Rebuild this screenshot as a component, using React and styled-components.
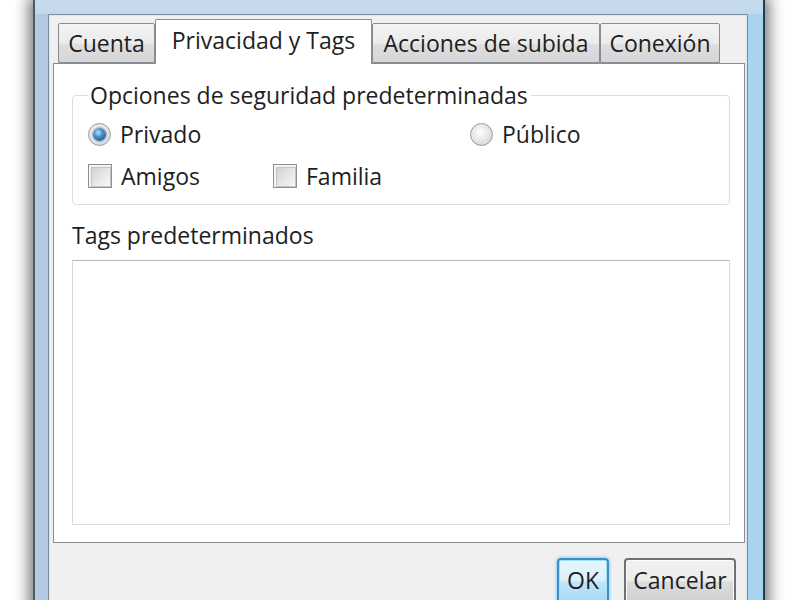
import React from "react";
import styled, { createGlobalStyle } from "styled-components";

const Global = createGlobalStyle`
  html, body { margin: 0; padding: 0; background: #ffffff; }
  body { width: 800px; height: 600px; overflow: hidden; font-family: "Open Sans", "Noto Sans", sans-serif; }
  * { box-sizing: border-box; }
`;

const Desktop = styled.div`
  width: 800px;
  height: 600px;
  overflow: hidden;
  background: #ffffff;
  padding-left: 33px;
`;

const Window = styled.div`
  width: 732px;
  height: 660px;
  border-left: 2px solid #4c5b69;
  border-right: 2px solid #21404f;
  background: linear-gradient(90deg, #b2c9e1 0%, #bcd2e8 40%, #a9d3ef 100%);
  box-shadow: 0 0 14px 4px rgba(0, 0, 0, 0.55);
  padding: 0 15px 0 13px;
  display: flex;
  flex-direction: column;
`;

const TitleBar = styled.div`
  height: 14px;
  background: linear-gradient(180deg, #c9dcee, #c3d8ec);
  margin: 0 -15px 0 -13px;
`;

const Client = styled.div`
  flex: 1;
  background: #f0f0f0;
  border: 1px solid #7c8d9e;
  box-shadow: inset 0 0 0 1px #dde5ec;
  padding: 4px 2px 0 4px;
  display: flex;
  flex-direction: column;
`;

const TabRow = styled.div`
  display: flex;
  align-items: flex-end;
  height: 44px;
  padding-left: 5px;
  position: relative;
  z-index: 1;
`;

const Tab = styled.div`
  width: ${(p) => p.$w}px;
  height: ${(p) => (p.$active ? 45 : 40)}px;
  margin-bottom: ${(p) => (p.$active ? -1 : 0)}px;
  border: 1px solid #898c95;
  border-bottom: ${(p) => (p.$active ? "none" : "1px solid #898c95")};
  border-radius: 2px 2px 0 0;
  background: ${(p) =>
    p.$active
      ? "#ffffff"
      : "linear-gradient(180deg, #f3f3f3 0%, #ebebeb 50%, #dedede 55%, #d6d6d6 100%)"};
  display: flex;
  align-items: center;
  justify-content: center;
  padding-bottom: ${(p) => (p.$active ? 5 : 0)}px;
  font-size: 23px;
  color: #1e1e1e;
  white-space: nowrap;
`;

const Panel = styled.div`
  height: 480px;
  background: #ffffff;
  border: 1px solid #898c95;
  padding: 17px 14px 0 18px;
  display: flex;
  flex-direction: column;
`;

const Group = styled.fieldset`
  margin: 0;
  border: 1px solid #d5dfe5;
  border-radius: 4px;
  padding: 4px 0 7px 15px;
  box-shadow: inset 1px 1px 0 #ffffff;
`;

const Legend = styled.legend`
  padding: 0 3px 0 2px;
  font-size: 23px;
  line-height: 28px;
  color: #1e1e1e;
`;

const OptionGrid = styled.div`
  display: grid;
  grid-template-columns: 185px 197px 1fr;
  grid-auto-rows: 42px;
  align-items: center;
`;

const Option = styled.label`
  display: flex;
  align-items: center;
  gap: 9px;
  font-size: 23px;
  color: #1e1e1e;
  grid-column: ${(p) => p.$col};
  grid-row: ${(p) => p.$row};
`;

const Radio = styled.span`
  width: 23px;
  height: 23px;
  border-radius: 50%;
  border: 1px solid #9a9a9a;
  background: radial-gradient(circle at 45% 40%, #ffffff 0%, #e6e6e6 50%, #c9c9c9 100%);
  display: flex;
  align-items: center;
  justify-content: center;
  &::after {
    content: "";
    display: ${(p) => (p.$checked ? "block" : "none")};
    width: 13px;
    height: 13px;
    border-radius: 50%;
    background: radial-gradient(circle at 40% 35%, #b9e2ff 0%, #3f8cc9 40%, #0f4f85 100%);
    box-shadow: 0 0 1px 1px rgba(40, 90, 140, 0.4);
  }
`;

const Check = styled.span`
  width: 24px;
  height: 24px;
  border: 1px solid #8f8f8f;
  background: #f4f4f4;
  padding: 2px;
  &::after {
    content: "";
    display: block;
    width: 100%;
    height: 100%;
    border: 1px solid #c4c4c4;
    background: linear-gradient(135deg, #d2d2d2 0%, #e6e6e6 50%, #f7f7f7 100%);
  }
`;

const FieldLabel = styled.div`
  margin-top: 16px;
  font-size: 23px;
  line-height: 28px;
  color: #1e1e1e;
`;

const TagsBox = styled.div`
  margin-top: 11px;
  height: 265px;
  border: 1px solid #dadada;
  border-top-color: #b9b9b9;
  background: #ffffff;
`;

const ButtonRow = styled.div`
  display: flex;
  justify-content: flex-end;
  gap: 15px;
  margin-top: 15px;
  padding-right: 9px;
`;

const Button = styled.div`
  width: ${(p) => p.$w}px;
  height: 46px;
  border-radius: 4px;
  border: 2px solid ${(p) => (p.$default ? "#3c8fc4" : "#707070")};
  box-shadow: ${(p) =>
    p.$default ? "0 0 3px 1px #8fd5f5, inset 0 0 0 1px #9fe0fa" : "inset 0 0 0 1px #fbfbfb"};
  background: ${(p) =>
    p.$default
      ? "linear-gradient(180deg, #e8f6fd 0%, #d9f0fc 50%, #bee6fd 52%, #a7d9f5 100%)"
      : "linear-gradient(180deg, #f2f2f2 0%, #ebebeb 50%, #dddddd 52%, #cfcfcf 100%)"};
  display: flex;
  align-items: center;
  justify-content: center;
  font-size: 23px;
  color: #1e1e1e;
  padding-bottom: 2px;
`;

export default function App() {
  return (
    <>
      <Global />
      <Desktop>
        <Window>
          <TitleBar />
          <Client>
            <TabRow>
              <Tab $w={97}>Cuenta</Tab>
              <Tab $w={217} $active>
                Privacidad y Tags
              </Tab>
              <Tab $w={228}>Acciones de subida</Tab>
              <Tab $w={120}>Conexión</Tab>
            </TabRow>
            <Panel>
              <Group>
                <Legend>Opciones de seguridad predeterminadas</Legend>
                <OptionGrid>
                  <Option $col={1} $row={1}>
                    <Radio $checked />
                    Privado
                  </Option>
                  <Option $col={3} $row={1}>
                    <Radio />
                    Público
                  </Option>
                  <Option $col={1} $row={2}>
                    <Check />
                    Amigos
                  </Option>
                  <Option $col={2} $row={2}>
                    <Check />
                    Familia
                  </Option>
                </OptionGrid>
              </Group>
              <FieldLabel>Tags predeterminados</FieldLabel>
              <TagsBox />
            </Panel>
            <ButtonRow>
              <Button $w={52} $default>
                OK
              </Button>
              <Button $w={112}>Cancelar</Button>
            </ButtonRow>
          </Client>
        </Window>
      </Desktop>
    </>
  );
}
